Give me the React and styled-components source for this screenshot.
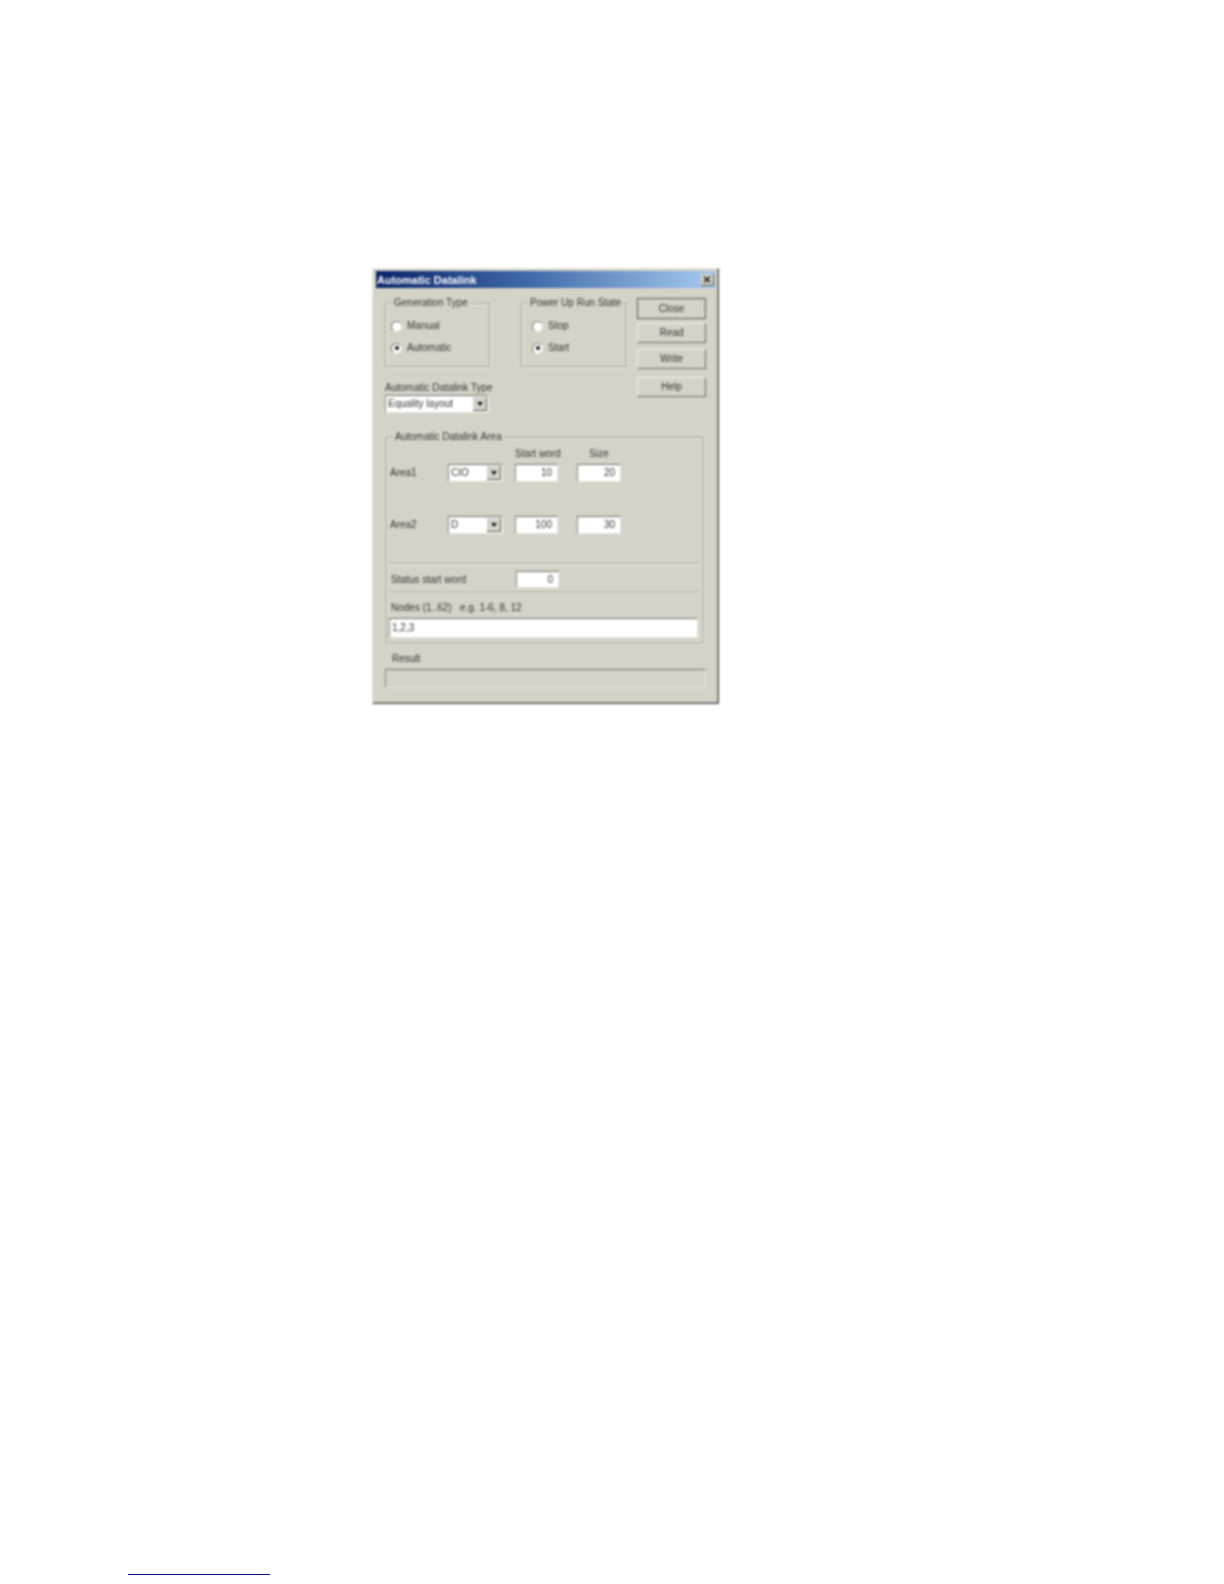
import React from "react";
import styled, { createGlobalStyle } from "styled-components";

const Global = createGlobalStyle`
  html, body { margin: 0; padding: 0; background: #fff; }
  body { font-family: "Liberation Sans", Arial, sans-serif; }
`;

const Page = styled.div`
  box-sizing: border-box;
  height: 1584px;
  padding: 268px 0 9px 128px;
  display: flex;
  flex-direction: column;
`;

const Dialog = styled.div`
  box-sizing: border-box;
  width: 347px;
  margin-left: 244px;
  padding: 2px 3px 15px;
  background: #d5d3c8;
  border-right: 1.5px solid #4a4a48;
  border-bottom: 1.5px solid #4a4a48;
  border-top: 1px solid #e8e6e0;
  border-left: 1px solid #e8e6e0;
  box-shadow: inset -1px -1px 0 #9a9891;
  color: #333331;
  font-size: 10px;
  line-height: 12px;
  filter: blur(0.85px);
`;

const TitleBar = styled.div`
  height: 17px;
  display: flex;
  align-items: center;
  justify-content: space-between;
  padding: 0 0 0 1px;
  background: linear-gradient(90deg, #0a246a 0%, #3f6aa8 45%, #a6caf0 100%);
  color: #fff;
  font-weight: 700;
  font-size: 11px;
`;

const CloseBox = styled.div`
  width: 13px;
  height: 12px;
  margin-right: 1px;
  display: flex;
  align-items: center;
  justify-content: center;
  background: #d5d3c8;
  border-right: 1px solid #555;
  border-bottom: 1px solid #555;
  box-sizing: border-box;
`;

const Body = styled.div`
  padding: 10px 9px 0 9px;
`;

const TopRow = styled.div`
  display: flex;
  gap: 10px;
  align-items: flex-start;
`;

const LeftArea = styled.div`
  width: 243px;
  padding-top: 5px;
`;

const GroupsRow = styled.div`
  display: flex;
  gap: 31px;
`;

const Group = styled.div`
  position: relative;
  box-sizing: border-box;
  width: ${(p) => p.$width}px;
  height: ${(p) => p.$height}px;
  border: 1px solid #a3a19a;
  box-shadow: 1px 1px 0 #eeece6, inset 1px 1px 0 #eeece6;
`;

const Legend = styled.span`
  position: absolute;
  top: -7px;
  left: 6px;
  padding: 0 2px;
  background: #d5d3c8;
  white-space: nowrap;
`;

const RadioList = styled.div`
  display: flex;
  flex-direction: column;
  gap: 8px;
  padding: 15px 0 0 ${(p) => p.$left}px;
`;

const RadioRow = styled.div`
  display: flex;
  align-items: center;
  gap: 5px;
  height: 14px;
`;

const RadioDot = styled.span`
  box-sizing: border-box;
  width: 11px;
  height: 11px;
  border-radius: 50%;
  background: #fff;
  border: 1px solid #77756f;
  border-right-color: #e8e6e0;
  border-bottom-color: #e8e6e0;
  display: flex;
  align-items: center;
  justify-content: center;
  &::after {
    content: "";
    width: 4px;
    height: 4px;
    border-radius: 50%;
    background: ${(p) => (p.$on ? "#111" : "transparent")};
  }
`;

const FieldLabel = styled.div`
  margin-top: 15px;
  height: 13px;
  white-space: nowrap;
`;

const Sunken = styled.div`
  box-sizing: border-box;
  height: ${(p) => p.$height || 18}px;
  background: ${(p) => p.$bg || "#fff"};
  border-top: 1.5px solid #6e6c67;
  border-left: 1.5px solid #8a8882;
  border-right: 1px solid #e6e4de;
  border-bottom: 1px solid #e6e4de;
`;

const Select = styled(Sunken)`
  width: ${(p) => p.$width}px;
  display: flex;
  align-items: center;
  justify-content: space-between;
  padding-left: 2px;
`;

const ArrowButton = styled.span`
  box-sizing: border-box;
  width: 14px;
  height: 14px;
  margin-right: 1px;
  background: #d5d3c8;
  border-right: 1px solid #55544f;
  border-bottom: 1.5px solid #55544f;
  display: flex;
  align-items: center;
  justify-content: center;
  &::after {
    content: "";
    border-left: 3.5px solid transparent;
    border-right: 3.5px solid transparent;
    border-top: 4px solid #111;
  }
`;

const NumberField = styled(Sunken)`
  display: flex;
  align-items: center;
  justify-content: flex-end;
  padding-right: 5px;
`;

const ButtonColumn = styled.div`
  display: flex;
  flex-direction: column;
  width: 69px;
`;

const PushButton = styled.div`
  box-sizing: border-box;
  height: ${(p) => p.$height}px;
  margin-top: ${(p) => p.$top}px;
  display: flex;
  align-items: center;
  justify-content: center;
  background: #d5d3c8;
  border-top: 1px solid #f0eee8;
  border-left: 1px solid ${(p) => (p.$default ? "#55544f" : "#f0eee8")};
  border-right: 1.5px solid #66645f;
  border-bottom: 1.5px solid #66645f;
  ${(p) => p.$default && "outline: 1px solid #55544f; outline-offset: -1px;"}
`;

const AreaGroup = styled(Group)`
  margin: 24px 0 0 1px;
  padding: 0 1px;
`;

const ControlGrid = styled.div`
  display: grid;
  grid-template-columns: 58px 55px 12px 43px 19px 44px;
  grid-template-rows: 12px 18px 34px 18px;
  padding: 14px 0 0 2px;
  align-items: center;
  & > * { min-width: 0; }
`;

const HeaderCell = styled.div`
  grid-row: 1;
  grid-column: ${(p) => p.$col};
  text-align: center;
  white-space: nowrap;
  transform: translateY(-4px);
`;

const Cell = styled.div`
  grid-row: ${(p) => p.$row};
  grid-column: ${(p) => p.$col};
`;

const Divider = styled.div`
  height: 1px;
  margin: ${(p) => p.$margin};
  background: #a9a7a0;
  box-shadow: 0 1px 0 #eeece6;
`;

const StatusRow = styled.div`
  display: grid;
  grid-template-columns: 113px 12px 43px;
  align-items: center;
  padding-left: 3px;
`;

const NodesLabel = styled.div`
  margin: 9px 0 4px 3px;
  height: 12px;
  white-space: pre;
`;

const NodesField = styled(Sunken)`
  width: 309px;
  margin-left: 1px;
  display: flex;
  align-items: center;
  padding-left: 2px;
`;

const ResultLabel = styled.div`
  margin: 9px 0 4px 7px;
  height: 12px;
`;

const FootnoteRule = styled.div`
  width: 142px;
  height: 1.5px;
  margin-top: auto;
  background: #14148f;
`;

const Radio = ({ on, children }) => (
  <RadioRow>
    <RadioDot $on={on} />
    {children}
  </RadioRow>
);

export default function App() {
  return (
    <Page>
      <Global />
      <Dialog>
        <TitleBar>
          Automatic Datalink
          <CloseBox>
            <svg width="8" height="7" viewBox="0 0 8 7">
              <path d="M1 0.5 L7 6.5 M7 0.5 L1 6.5" stroke="#111" strokeWidth="1.5" />
            </svg>
          </CloseBox>
        </TitleBar>
        <Body>
          <TopRow>
            <LeftArea>
              <GroupsRow>
                <Group $width={105} $height={64}>
                  <Legend>Generation Type</Legend>
                  <RadioList $left={5}>
                    <Radio>Manual</Radio>
                    <Radio on>Automatic</Radio>
                  </RadioList>
                </Group>
                <Group $width={106} $height={64}>
                  <Legend>Power Up Run State</Legend>
                  <RadioList $left={10}>
                    <Radio>Stop</Radio>
                    <Radio on>Start</Radio>
                  </RadioList>
                </Group>
              </GroupsRow>
              <FieldLabel>Automatic Datalink Type</FieldLabel>
              <Select $width={104}>
                Equality layout
                <ArrowButton />
              </Select>
            </LeftArea>
            <ButtonColumn>
              <PushButton $height={21} $top={0} $default>Close</PushButton>
              <PushButton $height={20} $top={4}>Read</PushButton>
              <PushButton $height={20} $top={6}>Write</PushButton>
              <PushButton $height={20} $top={8}>Help</PushButton>
            </ButtonColumn>
          </TopRow>

          <AreaGroup $width={318} $height={207}>
            <Legend>Automatic Datalink Area</Legend>
            <ControlGrid>
              <HeaderCell $col={4}>Start word</HeaderCell>
              <HeaderCell $col={6}>Size</HeaderCell>

              <Cell $row={2} $col={1}>Area1</Cell>
              <Cell $row={2} $col={2}>
                <Select $width={55}>CIO<ArrowButton /></Select>
              </Cell>
              <Cell $row={2} $col={4}><NumberField>10</NumberField></Cell>
              <Cell $row={2} $col={6}><NumberField>20</NumberField></Cell>

              <Cell $row={4} $col={1}>Area2</Cell>
              <Cell $row={4} $col={2}>
                <Select $width={55}>D<ArrowButton /></Select>
              </Cell>
              <Cell $row={4} $col={4}><NumberField>100</NumberField></Cell>
              <Cell $row={4} $col={6}><NumberField>30</NumberField></Cell>
            </ControlGrid>
            <Divider $margin="29px 3px 7px 1px" />
            <StatusRow>
              <span>Status start word</span>
              <span />
              <NumberField $height={17}>0</NumberField>
            </StatusRow>
            <Divider $margin="4px 3px 0 1px" />
            <NodesLabel>{"Nodes (1..62)   e.g. 1-6, 8, 12"}</NodesLabel>
            <NodesField $height={20}>1,2,3</NodesField>
          </AreaGroup>

          <ResultLabel>Result</ResultLabel>
          <Sunken $height={19} $bg="#d5d3c8" />
        </Body>
      </Dialog>
      <FootnoteRule />
    </Page>
  );
}
